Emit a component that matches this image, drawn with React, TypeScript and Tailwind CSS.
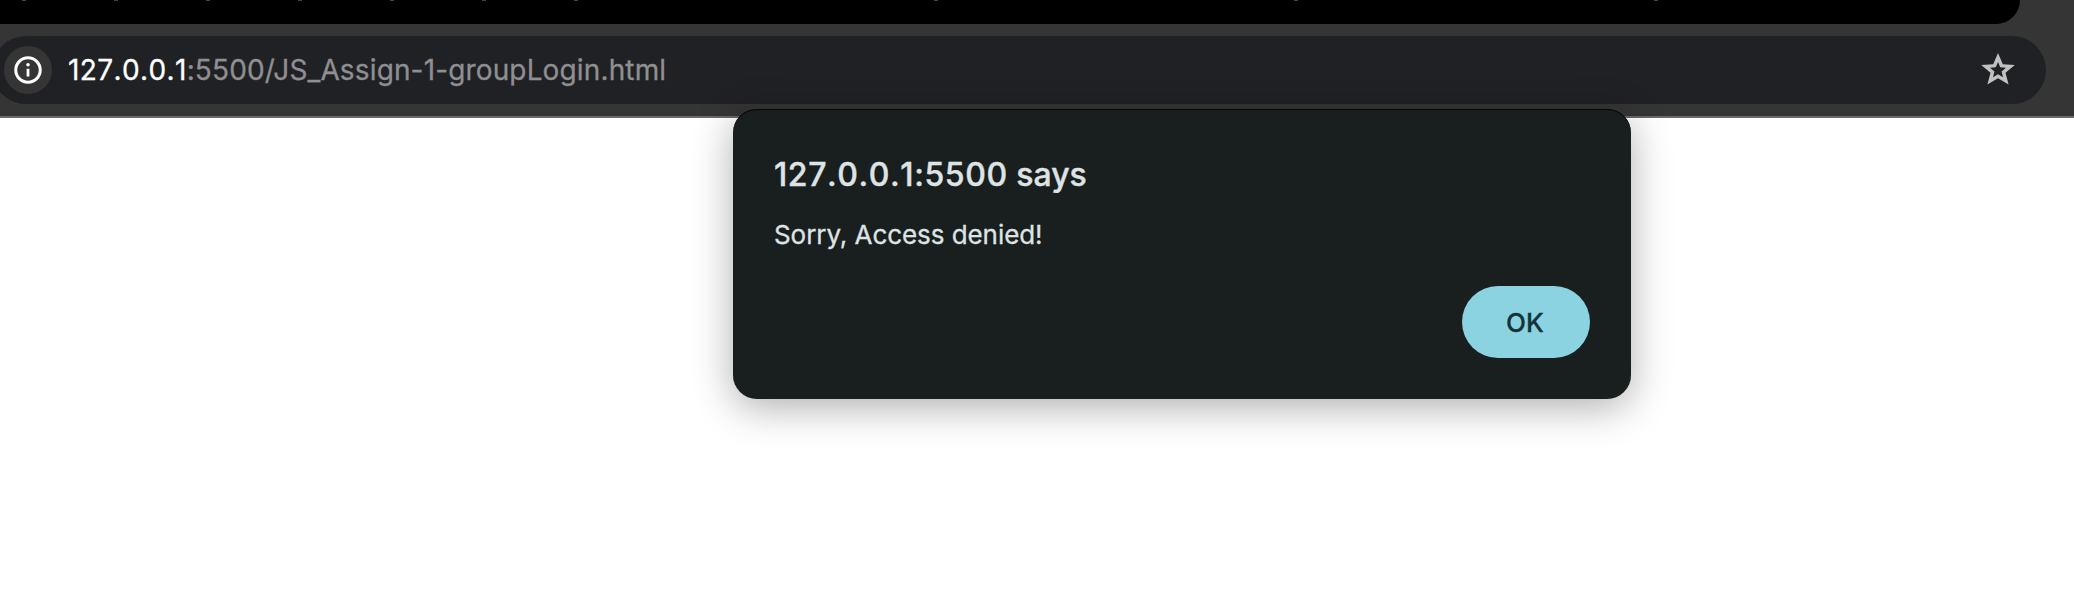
const tabTicks = [22, 114, 206, 298, 390, 482, 574, 934, 1294, 1654];

function InfoIcon() {
  return (
    <svg className="size-7" viewBox="0 0 28 28" fill="none" aria-hidden="true">
      <circle cx="14" cy="14" r="12.25" stroke="#fff" strokeWidth="3" />
      <path d="M14 12.8V20.5" stroke="#fff" strokeWidth="2.8" />
      <circle cx="14" cy="8.8" r="1.8" fill="#fff" />
    </svg>
  );
}

function StarIcon() {
  return (
    <svg className="h-8 w-[34px]" viewBox="0 0 34 32" aria-hidden="true">
      <path
        fill="#c1c1c1"
        fillRule="evenodd"
        d="M17 0l4.8 11.2 12 .8-9.3 7.8 3.1 11.7L17 25.3 6.4 31.5l3.1-11.7L.2 12l12-.8zM17 9l-2.2 5.3-5.8.5 4.4 3.8-1.4 5.7 5-3.1 5 3.1-1.4-5.7 4.4-3.8-5.8-.5z"
      />
    </svg>
  );
}

export default function App() {
  return (
    <div className="relative h-[602px] w-[2074px] overflow-hidden bg-white font-['Inter',sans-serif]">
      <header className="flex h-[118px] flex-col border-b-2 border-[#696969] bg-[#353535]">
        <div className="relative h-6 w-[2020px] rounded-br-[24px] bg-black">
          {tabTicks.map((x) => (
            <span key={x} className="absolute top-0 h-px w-1 bg-[#454545]" style={{ left: x }} />
          ))}
        </div>
        <div className="mt-3 -ml-2 flex h-[68px] w-[2054px] items-center rounded-[34px] bg-[#202125] pr-[31px] pl-3">
          <div className="flex size-12 items-center justify-center rounded-full bg-[#353535]">
            <InfoIcon />
          </div>
          <div className="ml-4 flex-1 text-[28px] leading-8 whitespace-nowrap text-[#8f8f91] [-webkit-text-stroke:0.3px_currentColor]">
            <span className="tracking-[0.38px] text-white [font-kerning:none]">127.0.0.1</span>
            <span className="tracking-[0.14px]">:5500/JS_Assign-1-groupLogin.html</span>
          </div>
          <div className="-mt-0.5">
            <StarIcon />
          </div>
        </div>
      </header>
      <section
        role="alertdialog"
        className="absolute top-[109px] left-[733px] flex h-[290px] w-[898px] flex-col rounded-[24px] bg-[#191e1e] px-[41px] pt-[46px] pb-[41px] shadow-[0_8px_40px_rgba(0,0,0,0.32),inset_0_1px_0_#050707]"
      >
        <h1 className="text-[32px] leading-10 font-medium whitespace-nowrap text-[#dfe3e4] [-webkit-text-stroke:0.4px_currentColor]">
          <span className="tracking-[0.58px] [font-kerning:none]">127.0.0.1:5500</span> says
        </h1>
        <p className="mt-6 text-[26px] leading-8 tracking-[-0.06px] whitespace-nowrap text-[#dfe3e4] [-webkit-text-stroke:0.3px_currentColor]">
          Sorry, Access denied!
        </p>
        <button className="mt-auto h-[72px] w-32 self-end rounded-full bg-[#8bd3e1] pr-0.5 text-[26px] font-medium text-[#12343b] [-webkit-text-stroke:0.3px_currentColor]">
          OK
        </button>
      </section>
    </div>
  );
}
